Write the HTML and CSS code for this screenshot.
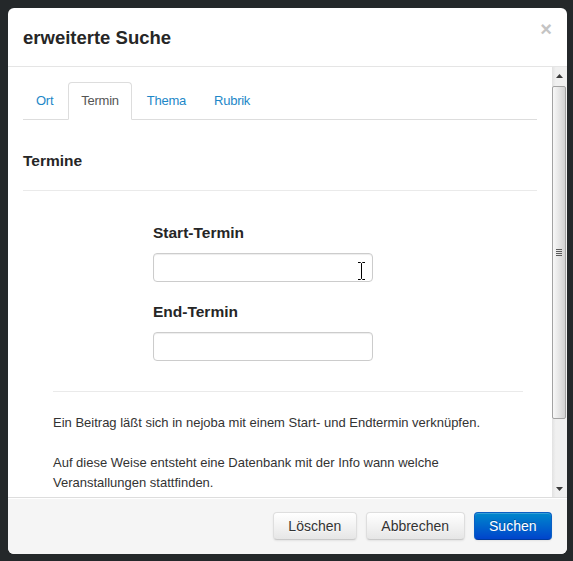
FILE: index.html
```html
<!DOCTYPE html>
<html lang="de">
<head>
<meta charset="utf-8">
<title>erweiterte Suche</title>
<link rel="stylesheet" href="styles.css">
</head>
<body>
<div class="modal">
  <div class="modal-header">
    <h3 class="modal-title">erweiterte Suche</h3>
    <button class="close" type="button">×</button>
  </div>
  <div class="modal-body">
    <div class="scroll-content">
      <ul class="tabs">
        <li><a href="#">Ort</a></li>
        <li class="active"><a href="#">Termin</a></li>
        <li><a href="#">Thema</a></li>
        <li><a href="#">Rubrik</a></li>
      </ul>
      <div class="pane">
        <h4 class="pane-title">Termine</h4>
        <hr class="rule">
        <form class="dates">
          <label class="date-label first">Start-Termin</label>
          <div class="field">
            <input class="date-input" type="text">
            <svg class="ibeam" width="7" height="18" viewBox="0 0 7 18"><path d="M0 .5h2.5l1 1 1-1H7M3.5 1.5v15M0 17.5h2.5l1-1 1 1H7" fill="none" stroke="#000" stroke-width="1"/></svg>
          </div>
          <label class="date-label">End-Termin</label>
          <div class="field">
            <input class="date-input" type="text">
          </div>
        </form>
        <div class="info">
          <hr class="rule">
          <p>Ein Beitrag läßt sich in nejoba mit einem Start- und Endtermin verknüpfen.</p>
          <p>Auf diese Weise entsteht eine Datenbank mit der Info wann welche Veranstallungen stattfinden.</p>
        </div>
      </div>
    </div>
    <div class="scrollbar" aria-hidden="true">
      <div class="sb-button">
        <svg width="7" height="4" viewBox="0 0 7 4"><path d="M3.5 0L7 4H0z" fill="#3a3a3a"/></svg>
      </div>
      <div class="sb-track">
        <div class="sb-thumb"><span class="sb-grip"></span></div>
      </div>
      <div class="sb-button">
        <svg width="7" height="4" viewBox="0 0 7 4"><path d="M0 0h7L3.5 4z" fill="#3a3a3a"/></svg>
      </div>
    </div>
  </div>
  <div class="modal-footer">
    <button class="btn" type="button">Löschen</button>
    <button class="btn" type="button">Abbrechen</button>
    <button class="btn btn-primary" type="button">Suchen</button>
  </div>
</div>
</body>
</html>
```

FILE: styles.css
```css
html, body {
  margin: 0;
  padding: 0;
}
body {
  background: #24282a;
  font-family: "Liberation Sans", Arial, sans-serif;
  color: #333;
  font-size: 13px;
  line-height: 20px;
  padding: 8px 0 0 8px;
  height: 561px;
  box-sizing: border-box;
}
.modal {
  width: 559px;
  height: 546px;
  background: #fff;
  border-radius: 6px;
  display: flex;
  flex-direction: column;
  overflow: hidden;
}
.modal-header {
  flex: none;
  border-bottom: 1px solid #e5e5e5;
  padding: 2px 15px 0;
  height: 56px;
  display: flex;
  align-items: center;
}
.modal-title {
  flex: 1;
  margin: 0;
  font-size: 18.5px;
  line-height: 18px;
  font-weight: bold;
  color: #262626;
}
.close {
  align-self: flex-start;
  margin-top: 9px;
  padding: 0;
  border: 0;
  background: none;
  font-family: "Liberation Sans", Arial, sans-serif;
  font-size: 20px;
  font-weight: bold;
  line-height: 20px;
  color: #c4c4c4;
  cursor: pointer;
}
.modal-body {
  flex: 1;
  min-height: 0;
  display: flex;
}
.scroll-content {
  flex: 1;
  min-width: 0;
  overflow: hidden;
  padding: 15px;
}
.scrollbar {
  flex: none;
  width: 15px;
  display: flex;
  flex-direction: column;
  background: linear-gradient(to right, #e2e2e2, #f0f0f0 25%, #f0f0f0);
}
.sb-button {
  flex: none;
  height: 17px;
  display: flex;
  align-items: center;
  justify-content: center;
}
.sb-track {
  flex: 1;
  padding-top: 2px;
}
.sb-thumb {
  box-sizing: border-box;
  height: 333px;
  margin: 0 1px 0 0;
  border: 1px solid #a3a3a3;
  border-radius: 2px;
  background: linear-gradient(to right, #f8f8f8, #e4e4e4 55%, #d2d2d2);
  display: flex;
  align-items: center;
  justify-content: center;
}
.sb-grip {
  width: 6px;
  height: 7px;
  background: repeating-linear-gradient(to bottom, #5a5a5a 0 1px, transparent 1px 2px);
}
.tabs {
  display: flex;
  list-style: none;
  margin: 0;
  padding: 0;
  border-bottom: 1px solid #ddd;
}
.tabs a {
  display: block;
  padding: 8px 12px;
  margin-right: 2px;
  margin-bottom: -1px;
  line-height: 20px;
  letter-spacing: -0.25px;
  border: 1px solid transparent;
  border-radius: 4px 4px 0 0;
  color: #1d87c8;
  text-decoration: none;
}
.tabs .active a {
  color: #555;
  background: #fff;
  border-color: #ddd #ddd transparent;
}
.pane-title {
  margin: 31px 0 0;
  font-size: 15.5px;
  line-height: 20px;
  font-weight: bold;
  color: #262626;
}
.rule {
  margin: 19px 0 0;
  height: 0;
  border: 0;
  border-top: 1px solid #eaeaea;
}
.dates {
  margin: 0;
  padding-left: 130px;
}
.date-label {
  display: block;
  margin-top: 20px;
  font-size: 15.5px;
  line-height: 20px;
  font-weight: bold;
  color: #262626;
}
.date-label.first {
  margin-top: 31.5px;
}
.field {
  position: relative;
  width: 220px;
  margin-top: 10px;
}
.date-input {
  display: block;
  box-sizing: border-box;
  width: 220px;
  height: 29px;
  margin: 0;
  padding: 4px 6px;
  border: 1px solid #ccc;
  border-radius: 4px;
  box-shadow: inset 0 1px 1px rgba(0, 0, 0, 0.075);
  font-family: "Liberation Sans", Arial, sans-serif;
  font-size: 13px;
  background: #fff;
}
.ibeam {
  position: absolute;
  left: 205px;
  top: 9px;
}
.info {
  margin: 0 14px 0 30px;
}
.info .rule {
  margin-top: 30px;
}
.info p {
  margin: 20px 0 0;
  line-height: 20px;
}
.info hr + p {
  margin-top: 21px;
}
.modal-footer {
  flex: none;
  display: flex;
  justify-content: flex-end;
  gap: 9px;
  padding: 14px 15px;
  background: #f5f5f5;
  border-top: 1px solid #ddd;
  box-shadow: inset 0 1px 0 #fff;
}
.btn {
  height: 28px;
  padding: 3px 14.5px;
  box-sizing: border-box;
  font-family: "Liberation Sans", Arial, sans-serif;
  font-size: 14px;
  line-height: 20px;
  color: #333;
  text-shadow: 0 1px 1px rgba(255, 255, 255, 0.75);
  background: linear-gradient(to bottom, #ffffff, #e6e6e6);
  border: 1px solid #dedede;
  border-bottom-color: #c9c9c9;
  border-radius: 4px;
  box-shadow: inset 0 1px 0 rgba(255, 255, 255, 0.2), 0 1px 2px rgba(0, 0, 0, 0.08);
  cursor: pointer;
}
.btn-primary {
  color: #fff;
  text-shadow: 0 -1px 0 rgba(0, 0, 0, 0.25);
  background: linear-gradient(to bottom, #0088cc, #0044cc);
  border-color: #0a5fc4 #0a5fc4 #003a9e;
}
```
